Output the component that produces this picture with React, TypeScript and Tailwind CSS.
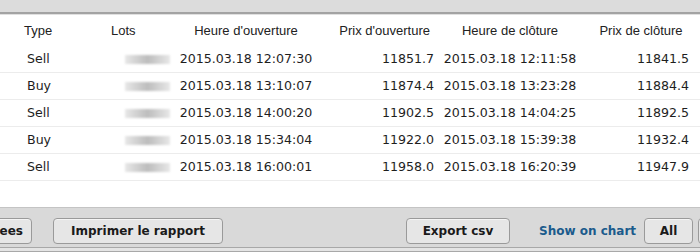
import React from "react";

const rows = [
  ["Sell", "2015.03.18 12:07:30", "11851.7", "2015.03.18 12:11:58", "11841.5"],
  ["Buy", "2015.03.18 13:10:07", "11874.4", "2015.03.18 13:23:28", "11884.4"],
  ["Sell", "2015.03.18 14:00:20", "11902.5", "2015.03.18 14:04:25", "11892.5"],
  ["Buy", "2015.03.18 15:34:04", "11922.0", "2015.03.18 15:39:38", "11932.4"],
  ["Sell", "2015.03.18 16:00:01", "11958.0", "2015.03.18 16:20:39", "11947.9"],
];

const grid = "grid grid-cols-[80px_96px_140px_124px_140px_120px]";

function Btn({ children, className = "" }: { children: React.ReactNode; className?: string }) {
  return (
    <div
      className={`h-[26px] shrink-0 whitespace-nowrap overflow-hidden flex items-center justify-center rounded-[4px] border border-[#9a9a9a] bg-[#e6e6e6] font-bold text-[12px] text-[#1a1a1a] shadow-[inset_0_1px_0_#f4f4f4] ${className}`}
    >
      {children}
    </div>
  );
}

export default function App() {
  return (
    <div className="w-[700px] h-[252px] overflow-hidden bg-white flex flex-col" style={{ fontFamily: '"DejaVu Sans", Verdana, sans-serif' }}>
      <div className="h-[12px] bg-[#dcdcdc] shrink-0" />
      <div className="h-[2px] bg-[#a3a3a3] shrink-0" />
      <div className="h-[1px] bg-[#e0e0e0] shrink-0" />
      <div
        className={`${grid} h-[31px] items-center text-[13px] text-[#222]`}
        style={{ fontFamily: '"Liberation Sans", Arial, sans-serif' }}
      >
        <div className="pl-[24px]">Type</div>
        <div className="pl-[31px]">Lots</div>
        <div className="text-center">Heure d'ouverture</div>
        <div className="text-right pr-[10px]">Prix d'ouverture</div>
        <div className="text-center">Heure de clôture</div>
        <div className="text-center pl-[2px]">Prix de clôture</div>
      </div>
      {rows.map((r, i) => (
        <div key={i} className={`${grid} h-[27px] items-center text-[12.6px] text-[#1e1e1e] border-b border-[#ececec]`}>
          <div className="pl-[27px]">{r[0]}</div>
          <div className="flex justify-end pr-[6px]">
            <div className="w-[45px] h-[9px] bg-gradient-to-r from-[#e8e8e8] via-[#bdbdbd] to-[#e8e8e8] blur-[1px]" />
          </div>
          <div className="text-center">{r[1]}</div>
          <div className="text-right pr-[6px]">{r[2]}</div>
          <div className="text-center">{r[3]}</div>
          <div className="text-right pr-[11px]">{r[4]}</div>
        </div>
      ))}
      <div className="h-[26px] shrink-0" />
      <div className="h-[1px] bg-[#c4c4c4] shrink-0" />
      <div className="h-[39px] bg-[#d9d9d9] flex items-start pt-[10px] shrink-0">
        <Btn className="w-[66px] ml-[-34px] justify-end pr-[8px]">Sauvegardees</Btn>
        <Btn className="w-[170px] ml-[21px]">Imprimer le rapport</Btn>
        <Btn className="w-[104px] ml-[183px]">Export csv</Btn>
        <div className="ml-[29px] h-[26px] shrink-0 whitespace-nowrap flex items-center font-bold text-[12px] text-[#1b5b8c]">Show on chart</div>
        <Btn className="w-[49px] ml-[8px]">All</Btn>
        <Btn className="w-[40px] ml-[5px]">M</Btn>
      </div>
      <div className="h-[1px] bg-[#a8a8a8] shrink-0" />
      <div className="h-[3px] bg-[#e4e4e4] shrink-0" />
      <div className="h-[1px] bg-[#a8a8a8] shrink-0" />
      <div className="flex-1 bg-[#dcdcdc]" />
    </div>
  );
}
